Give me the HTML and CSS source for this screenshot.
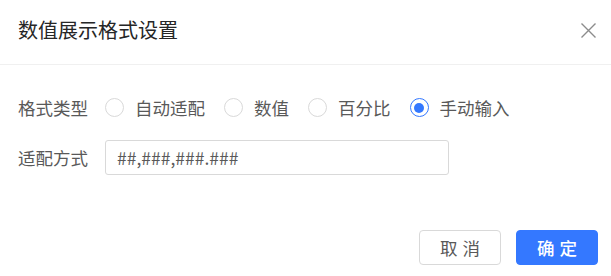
FILE: index.html
```html
<!DOCTYPE html>
<html lang="zh-CN">
<head>
<meta charset="utf-8">
<title>数值展示格式设置</title>
<link rel="stylesheet" href="styles.css">
</head>
<body>
<div class="dialog">
  <div class="header">
    <div class="title">数值展示格式设置</div>
    <button class="close" aria-label="关闭">
      <svg width="15" height="15" viewBox="0 0 15 15"><path d="M0.5 0.5 L14.5 14.5 M14.5 0.5 L0.5 14.5" stroke="#8c8c8c" stroke-width="1.4" fill="none"/></svg>
    </button>
  </div>
  <div class="body">
    <div class="row">
      <div class="label">格式类型</div>
      <div class="radios">
        <label class="radio"><span class="circle"></span><span class="text">自动适配</span></label>
        <label class="radio"><span class="circle"></span><span class="text">数值</span></label>
        <label class="radio"><span class="circle"></span><span class="text">百分比</span></label>
        <label class="radio checked"><span class="circle"></span><span class="text">手动输入</span></label>
      </div>
    </div>
    <div class="row">
      <div class="label">适配方式</div>
      <div class="input">##,###,###.###</div>
    </div>
  </div>
  <div class="footer">
    <button class="btn"><span class="two">取消</span></button>
    <button class="btn primary"><span class="two">确定</span></button>
  </div>
</div>
</body>
</html>
```
FILE: styles.css
```css
* { box-sizing: border-box; }
html, body { margin: 0; padding: 0; background: #fff; }
body {
  width: 611px;
  height: 276px;
  overflow: hidden;
  font-family: "Noto Sans CJK SC", "Noto Sans", sans-serif;
}
.dialog { width: 611px; }
.header {
  height: 65px;
  padding: 0 15px 4px 18px;
  border-bottom: 1px solid #f0f0f0;
  display: flex;
  align-items: center;
  justify-content: space-between;
}
.title {
  font-size: 20px;
  line-height: 28px;
  color: #262626;
}
.close {
  border: 0;
  background: none;
  padding: 0;
  width: 15px;
  height: 15px;
  display: flex;
}
.body {
  padding: 25px 18px 0 18px;
  display: flex;
  flex-direction: column;
  gap: 15px;
}
.row {
  height: 35px;
  display: flex;
  align-items: center;
}
.label {
  width: 87px;
  font-size: 17.5px;
  color: #595959;
  line-height: 24px;
}
.radios { display: flex; align-items: center; }
.radio {
  display: flex;
  align-items: center;
  margin-right: 19px;
  font-size: 17.5px;
  color: #595959;
  line-height: 24px;
}
.circle {
  width: 19px;
  height: 19px;
  border: 1px solid #d9d9d9;
  border-radius: 50%;
  margin-right: 11px;
  display: flex;
  align-items: center;
  justify-content: center;
}
.radio.checked .circle { border-color: #3478ff; }
.radio.checked .circle::after {
  content: "";
  width: 10px;
  height: 10px;
  border-radius: 50%;
  background: #3478ff;
}
.input {
  width: 344px;
  height: 35px;
  border: 1px solid #d9d9d9;
  border-radius: 3px;
  padding: 0 11px;
  display: flex;
  align-items: center;
  font-size: 17.5px;
  color: #595959;
}
.footer {
  margin-top: 55px;
  padding-right: 13px;
  display: flex;
  justify-content: flex-end;
  gap: 15px;
}
.btn {
  width: 82px;
  height: 35px;
  border: 1px solid #d9d9d9;
  border-radius: 4px;
  background: #fff;
  color: #595959;
  font-family: inherit;
  font-size: 17.5px;
  display: flex;
  align-items: center;
  justify-content: center;
  padding: 0;
}
.btn .two { letter-spacing: 0.3em; margin-right: -0.3em; }
.btn.primary {
  background: #3478ff;
  border-color: #3478ff;
  color: #fff;
  font-weight: 500;
}
```
